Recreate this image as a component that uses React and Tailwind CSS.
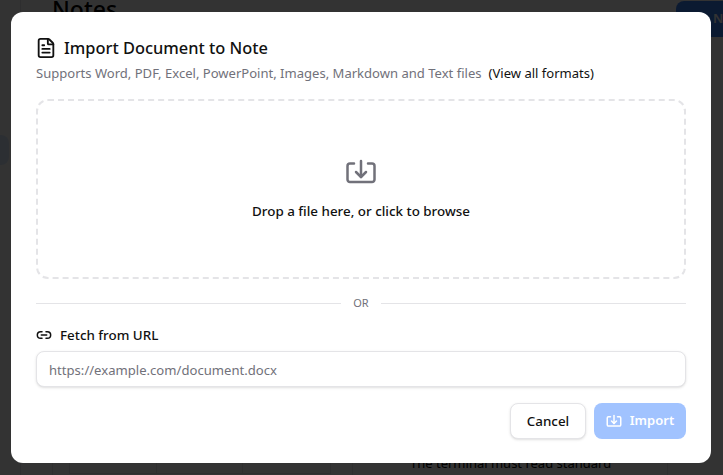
import React from 'react';
import { FileText, Link2 } from 'lucide-react';

const TrayIcon = ({ className, strokeWidth = 2.5 }) => (
  <svg viewBox="0 0 32 32" fill="none" stroke="currentColor" strokeWidth={strokeWidth} strokeLinecap="round" strokeLinejoin="round" className={className}>
    <path d="M9 7.5H5a2.5 2.5 0 0 0-2.5 2.5v13.5A2.5 2.5 0 0 0 5 26h22a2.5 2.5 0 0 0 2.5-2.5V10A2.5 2.5 0 0 0 27 7.5h-4" />
    <path d="M16 5v16" />
    <path d="m11 16 5 5 5-5" />
  </svg>
);

const App = () => {
  return (
    <div className="relative h-[475px] w-[723px] overflow-hidden bg-white font-['Noto_Sans',sans-serif]">
      {/* Page behind the dialog */}
      <div className="flex h-full">
        <div className="w-[21px] shrink-0 border-r border-gray-200 pt-[135px]">
          <div className="h-[30px] w-[9px] rounded-r-lg bg-blue-100" />
        </div>
        <div className="flex min-w-0 flex-1 flex-col pl-[31px]">
          <div className="flex h-[40px] shrink-0 items-start justify-between">
            <h1 className="-mt-[6px] text-[23px] font-medium leading-[30px] text-black">Notes</h1>
            <button className="mt-[1px] h-[36px] w-[47px] overflow-hidden whitespace-nowrap rounded-l-lg bg-[#3b82f6] pl-[37px] text-left text-[13px] font-semibold text-white">New</button>
          </div>
          <div className="flex min-h-0 flex-1">
            <div className="flex w-[301px] shrink-0 border-x border-gray-200 pb-px pl-[16px]">
              <div className="mr-[21px] grid flex-1 grid-cols-3 border-x border-b border-gray-200">
                <div className="border-r border-gray-200" />
                <div className="border-r border-gray-200" />
                <div />
              </div>
            </div>
            <div className="flex w-[315px] shrink-0 flex-col justify-end border-r border-gray-200 pb-[2px] pl-[57px]">
              <p className="text-[13px] leading-[20px] text-black">The terminal must read standard</p>
            </div>
          </div>
        </div>
      </div>

      {/* Overlay */}
      <div className="absolute inset-0 bg-black/80" />

      {/* Dialog */}
      <div className="absolute left-[11px] top-[12px] flex h-[451px] w-[700px] flex-col rounded-xl bg-white px-[25px] pt-[25px]">
        <div className="flex items-center gap-[7px]">
          <FileText className="-ml-px h-[22px] w-[22px] text-[#111]" strokeWidth={2} />
          <h2 className="text-[16.4px] font-medium leading-[22px] text-[#111]">Import Document to Note</h2>
        </div>
        <p className="mt-[4px] text-[13.05px] leading-[20px] text-[#71717a]">
          Supports Word, PDF, Excel, PowerPoint, Images, Markdown and Text files
          <span className="ml-[7px] text-[#111]">(View all formats)</span>
        </p>

        <div className="mt-[16px] flex h-[180px] flex-col items-center justify-center rounded-xl border-2 border-dashed border-[#e4e4e7] pb-px">
          <TrayIcon className="h-[32px] w-[32px] text-[#71717a]" />
          <span className="mt-[13px] text-[13.4px] font-medium leading-[20px] text-[#111]">Drop a file here, or click to browse</span>
        </div>

        <div className="mt-[15px] flex items-center gap-3">
          <div className="h-px flex-1 bg-[#e4e4e7]" />
          <span className="text-[11px] leading-[18px] text-[#71717a]">OR</span>
          <div className="h-px flex-1 bg-[#e4e4e7]" />
        </div>

        <div className="mt-[13px] flex items-center gap-[8px]">
          <Link2 className="h-4 w-4 text-[#111]" strokeWidth={2.25} />
          <span className="text-[13.4px] font-medium leading-[20px] text-[#111]">Fetch from URL</span>
        </div>
        <input
          readOnly
          placeholder="https://example.com/document.docx"
          className="mt-[6px] h-[36px] w-full rounded-lg border border-[#e4e4e7] bg-white px-3 pt-px text-[13.1px] text-[#111] shadow-sm outline-none placeholder:text-[#71717a]"
        />

        <div className="mt-[16px] flex justify-end gap-2">
          <button className="h-[36px] w-[76px] rounded-lg border border-[#e4e4e7] bg-white text-[13.4px] font-medium text-[#111] shadow-sm">Cancel</button>
          <button className="flex h-[36px] w-[92px] items-center justify-center gap-[8px] rounded-lg bg-[#a1c3ff] text-[13px] font-semibold text-white">
            <TrayIcon className="h-4 w-4" strokeWidth={3} />
            Import
          </button>
        </div>
      </div>
    </div>
  );
};

export default App;
